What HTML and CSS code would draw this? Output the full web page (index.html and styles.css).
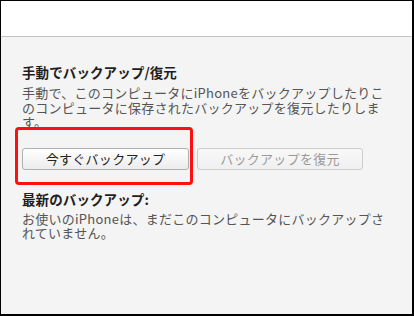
FILE: index.html
```html
<!DOCTYPE html>
<html lang="ja">
<head>
<meta charset="utf-8">
<link rel="stylesheet" href="styles.css">
</head>
<body>
<div class="frame">
  <div class="topbar"></div>
  <div class="content">
    <section class="section">
      <h2 class="title">手動でバックアップ/復元</h2>
      <p class="desc">手動で、このコンピュータにiPhoneをバックアップしたりこのコンピュータに保存されたバックアップを復元したりします。</p>
      <div class="buttons">
        <button class="btn">今すぐバックアップ</button>
        <button class="btn btn-disabled" disabled>バックアップを復元</button>
        <div class="highlight"></div>
      </div>
    </section>
    <section class="section second">
      <h2 class="title">最新のバックアップ:</h2>
      <p class="desc desc-tight">お使いのiPhoneは、まだこのコンピュータにバックアップされていません。</p>
    </section>
  </div>
</div>
</body>
</html>
```

FILE: styles.css
```css
html, body {
  margin: 0;
  padding: 0;
}
body {
  font-family: "Noto Sans CJK JP", "Noto Sans", sans-serif;
}
.frame {
  width: 414px;
  height: 316px;
  box-sizing: border-box;
  border-top: 1px solid #000;
  border-left: 1px solid #000;
  border-right: 2px solid #000;
  border-bottom: 2px solid #000;
  background: #f4f4f4;
  display: flex;
  flex-direction: column;
}
.topbar {
  height: 35px;
  background: #fff;
  border-bottom: 1px solid #c4c4c4;
  flex: none;
}
.content {
  padding: 27px 0 0 21px;
}
.section {
  width: 367px;
}
.title {
  margin: 0;
  font-size: 13.5px;
  font-weight: bold;
  letter-spacing: 0.1px;
  line-height: 16px;
  color: #1e1e1e;
}
.desc {
  margin: 6px 0 0 0;
  font-size: 13px;
  letter-spacing: 0.25px;
  line-height: 14.5px;
  color: #555;
}
.desc-tight {
  margin-top: 5px;
}
.buttons {
  position: relative;
  display: flex;
  gap: 8px;
  margin-top: 18px;
}
.btn {
  width: 167px;
  height: 22px;
  box-sizing: border-box;
  border: 1px solid #b0b0b0;
  border-radius: 3px;
  background: linear-gradient(#ffffff, #ececec);
  font-family: "Noto Sans CJK JP", "Noto Sans", sans-serif;
  font-size: 13px;
  letter-spacing: 0.3px;
  line-height: 18px;
  color: #222;
  padding: 0;
}
.btn-disabled {
  width: 166px;
  border-color: #cdcdcd;
  background: linear-gradient(#f8f8f8, #f0f0f0);
  color: #9a9a9a;
}
.highlight {
  position: absolute;
  left: -7px;
  top: -21px;
  width: 178px;
  height: 58px;
  box-sizing: border-box;
  border: 3px solid #ff1010;
  border-radius: 4px;
  pointer-events: none;
}
.second {
  margin-top: 21px;
}
```
